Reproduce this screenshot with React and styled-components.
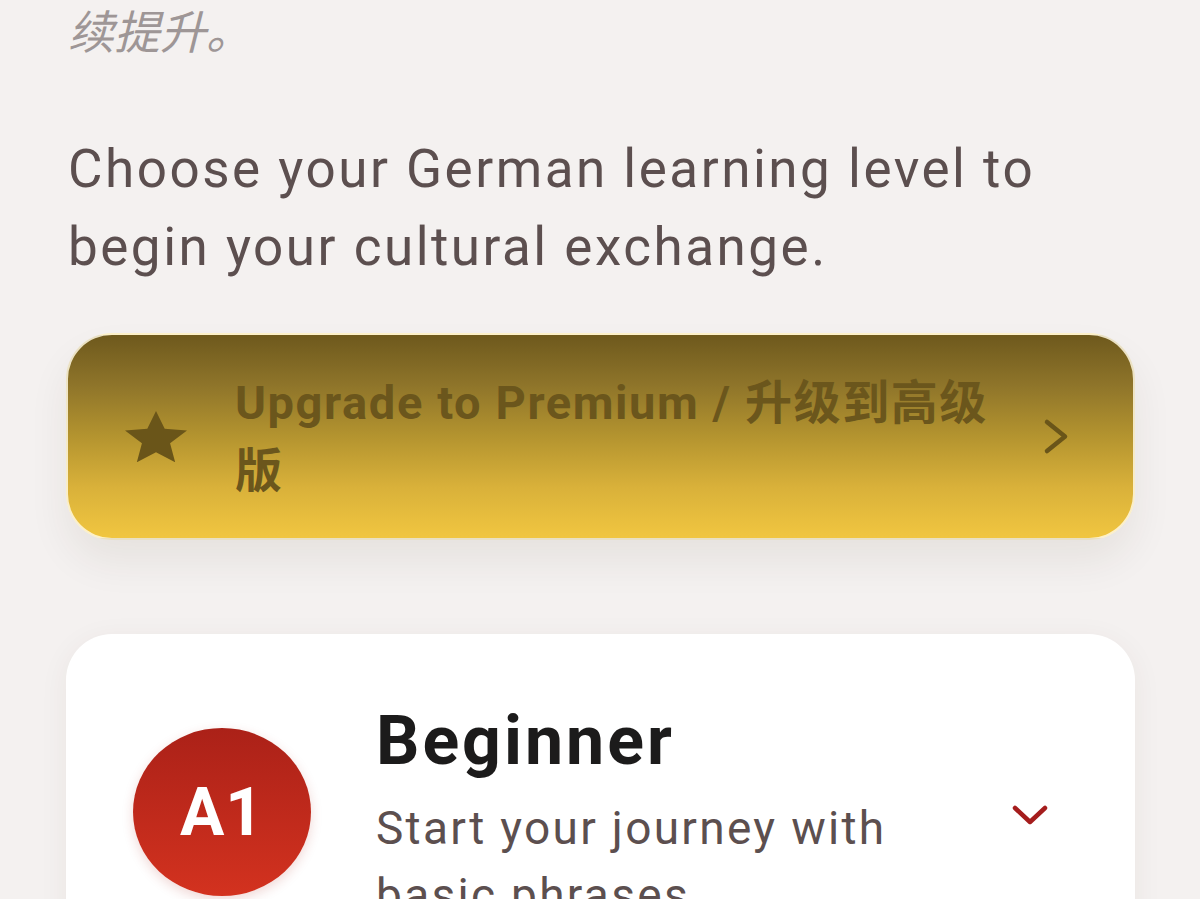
import styled, { createGlobalStyle } from "styled-components";

const GlobalStyle = createGlobalStyle`
  html, body {
    margin: 0;
    padding: 0;
    height: 100%;
    overflow: hidden;
    background: #f4f1f0;
  }
  body {
    font-family: Roboto, "Noto Sans CJK SC", sans-serif;
  }
`;

const Page = styled.div`
  padding: 0 65px 0 66px;
  background: #f4f1f0;
  min-height: 899px;
  box-sizing: border-box;
`;

const Intro = styled.p`
  margin: 0 0 0 2px;
  font-size: 46px;
  line-height: 66px;
  font-style: italic;
  color: #9e9696;
`;

const Lead = styled.p`
  margin: 64px 0 0 2px;
  font-size: 53px;
  line-height: 78px;
  letter-spacing: 2.5px;
  color: #5c4f4f;
`;

const Premium = styled.button`
  display: flex;
  align-items: center;
  width: 100%;
  height: 207px;
  margin-top: 47px;
  padding: 0 63px 0 57px;
  box-sizing: border-box;
  border: 2px solid rgba(255, 248, 225, 0.85);
  border-radius: 46px;
  background: linear-gradient(180deg, #6e591d 0%, #8f752a 25%, #b4942f 50%, #d9b13a 75%, #f1c640 100%);
  box-shadow: 0 22px 40px rgba(60, 40, 20, 0.07);
  font-family: inherit;
  text-align: left;
  cursor: pointer;
`;

const Star = styled.svg`
  flex: none;
  width: 62px;
  height: 52px;
  fill: #6a5519;
`;

const PremiumLabel = styled.span`
  flex: 1;
  margin-left: 48px;
  margin-right: 40px;
  font-size: 47px;
  line-height: 68px;
  font-weight: 700;
  letter-spacing: 1.6px;
  color: #6b561c;
`;

const Chevron = styled.svg`
  flex: none;
  width: ${(p) => p.w}px;
  height: ${(p) => p.h}px;
  fill: none;
  stroke: ${(p) => p.color};
  stroke-width: ${(p) => p.sw};
  stroke-linecap: round;
  stroke-linejoin: round;
`;

const LevelCard = styled.div`
  display: flex;
  align-items: center;
  margin-top: 94px;
  padding: 61px 81px 61px 67px;
  background: #ffffff;
  border-radius: 46px;
  box-shadow: 0 6px 30px rgba(80, 50, 40, 0.06);
`;

const Badge = styled.div`
  flex: none;
  display: flex;
  align-items: center;
  justify-content: center;
  width: 178px;
  height: 168px;
  border-radius: 50%;
  background: linear-gradient(180deg, #ab2118 0%, #d3321f 100%);
  box-shadow: 0 4px 12px rgba(170, 40, 30, 0.18);
  color: #ffffff;
  font-size: 66px;
  font-weight: 700;
  letter-spacing: 1px;
`;

const LevelText = styled.div`
  flex: 1;
  margin: 6px 32px 0 65px;
`;

const LevelTitle = styled.h2`
  margin: 0;
  font-size: 68px;
  line-height: 80px;
  font-weight: 700;
  letter-spacing: 3px;
  color: #1c1b1b;
`;

const LevelDesc = styled.p`
  margin: 14px 0 0;
  font-size: 46px;
  line-height: 67px;
  letter-spacing: 2.3px;
  color: #5c4f4f;
`;

const ExpandBox = styled.div`
  flex: none;
  display: flex;
  align-items: center;
  justify-content: center;
  width: 48px;
  margin-top: 6px;
`;

export default function App() {
  return (
    <>
      <GlobalStyle />
      <Page>
        <Intro>续提升。</Intro>
        <Lead>Choose your German learning level to begin your cultural exchange.</Lead>
        <Premium>
          <Star viewBox="2 2 20 19.3" preserveAspectRatio="none">
            <path d="M12 17.27L18.18 21l-1.64-7.03L22 9.24l-7.19-.61L12 2 9.19 8.63 2 9.24l5.46 4.73L5.82 21z" />
          </Star>
          <PremiumLabel>Upgrade to Premium / 升级到高级版</PremiumLabel>
          <Chevron w={27} h={37} sw={4.5} color="#6a5519" viewBox="0 0 27 37">
            <path d="M4 4l18 14.5L4 33" />
          </Chevron>
        </Premium>
        <LevelCard>
          <Badge>A1</Badge>
          <LevelText>
            <LevelTitle>Beginner</LevelTitle>
            <LevelDesc>Start your journey with basic phrases</LevelDesc>
          </LevelText>
          <ExpandBox>
            <Chevron w={36} h={20} sw={4.5} color="#a51d1d" viewBox="0 0 36 20">
              <path d="M3 3l15 14L33 3" />
            </Chevron>
          </ExpandBox>
        </LevelCard>
      </Page>
    </>
  );
}
